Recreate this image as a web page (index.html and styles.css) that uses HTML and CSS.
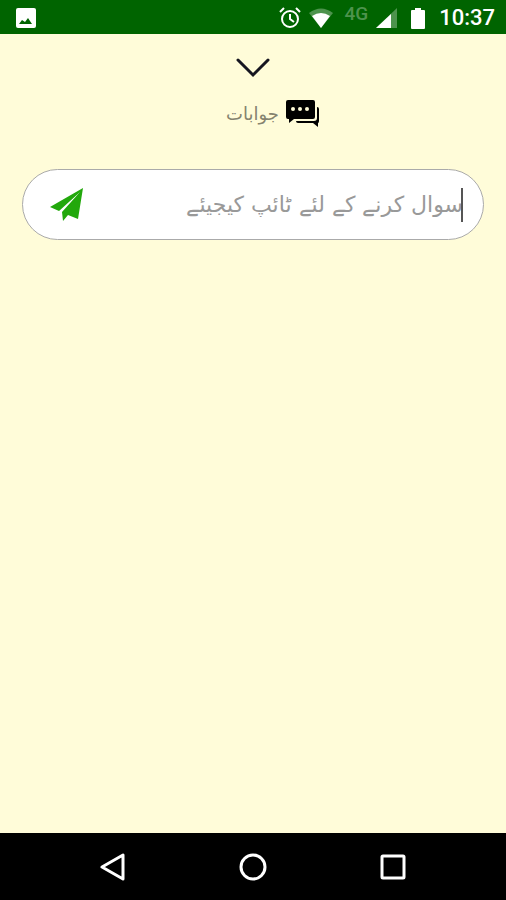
FILE: index.html
```html
<!DOCTYPE html>
<html lang="ur">
  <head>
    <meta charset="UTF-8" />
    <meta name="viewport" content="width=device-width, initial-scale=1.0" />
    <title>جوابات</title>
    <link rel="stylesheet" href="styles.css">
  </head>
  <body>
    <header class="status-bar">
      <svg class="icon-photo" width="20" height="20" viewBox="0 0 20 20">
        <rect width="20" height="20" rx="2" fill="#fff" />
        <path d="M3 16l3-4 3 2 3-4 4 6z" fill="#006400" />
      </svg>
      <div class="status-icons">
        <svg width="22" height="22" viewBox="0 0 22 22" fill="none" stroke="#fff" stroke-width="2">
          <circle cx="11" cy="12" r="8" />
          <path d="M11 7v5l4 3M1 5l4-4M21 5l-4-4" />
        </svg>
        <svg class="icon-wifi" width="24" height="20" viewBox="0 0 24 20">
          <path d="M0 5Q12-4 24 5L12 20z" fill="#4d934d" />
          <path d="M3 8Q12 2 21 8L12 20z" fill="#fff" />
        </svg>
        <span class="network">4G</span>
        <svg class="icon-signal" width="21" height="20" viewBox="0 0 21 20">
          <path d="M21 0v20H0z" fill="#4d934d" />
          <path d="M15 6v14H0z" fill="#fff" />
        </svg>
        <svg class="icon-battery" width="14" height="21" viewBox="0 0 14 21">
          <path d="M4 0h6v2h3q1 0 1 1v17q0 1-1 1H1q-1 0-1-1V3q0-1 1-1h3z" fill="#fff" />
        </svg>
        <span class="clock">10:37</span>
      </div>
    </header>

    <main class="content">
      <button class="collapse" type="button" aria-label="Close">
        <svg width="34" height="20" viewBox="0 0 34 20" fill="none" stroke="#161620" stroke-width="3" stroke-linecap="round">
          <path d="M2 2l15 15L32 2" />
        </svg>
      </button>

      <div class="answers" dir="rtl">
        <svg width="34" height="27" viewBox="0 0 34 27">
          <path d="M2 0h25q2 0 2 2v15q0 2-2 2H8l-5 4v-4H2q-2 0-2-2V2q0-2 2-2z" fill="#000" />
          <path d="M31 7q2 0 2 2v12q0 2-1 2v4l-5-4H12q-2 0-2-2h18q3 0 3-3z" fill="#000" />
          <circle cx="7" cy="9" r="2" fill="#fffcd9" />
          <circle cx="14" cy="9" r="2" fill="#fffcd9" />
          <circle cx="21" cy="9" r="2" fill="#fffcd9" />
        </svg>
        <span>جوابات</span>
      </div>

      <form class="question" dir="rtl">
        <input class="question-input" type="text" aria-label="سوال" placeholder="سوال کرنے کے لئے ٹائپ کیجیئے" />
        <span class="caret"></span>
        <button class="send" type="button" aria-label="Send">
          <svg width="34" height="34" viewBox="0 0 34 34" fill="#22a80c">
            <path d="M34 0L1 19l9 4L31 4 13 24l1 9 5-6 10 4z" />
          </svg>
        </button>
      </form>
    </main>

    <nav class="nav-bar">
      <button type="button" aria-label="Back">
        <svg width="28" height="28" viewBox="0 0 28 28"><path d="M24 2v24L3 14z" /></svg>
      </button>
      <button type="button" aria-label="Home">
        <svg width="28" height="28" viewBox="0 0 28 28"><circle cx="14" cy="14" r="12" /></svg>
      </button>
      <button type="button" aria-label="Recent">
        <svg width="28" height="28" viewBox="0 0 28 28"><rect x="3" y="3" width="22" height="22" rx="1" /></svg>
      </button>
    </nav>
  </body>
</html>
```
FILE: styles.css
```css
* {
  box-sizing: border-box;
}

body {
  display: flex;
  flex-direction: column;
  min-height: 100vh;
  margin: 0;
  background-color: #fffcd9;
  font-family: "DejaVu Sans", sans-serif;
}

svg {
  display: block;
}

button {
  padding: 0;
  border: none;
  background: none;
  cursor: pointer;
}

.status-bar {
  display: flex;
  justify-content: space-between;
  align-items: center;
  height: 34px;
  padding: 2px 11px 0 16px;
  background-color: #006400;
  color: white;
  font-family: Roboto, sans-serif;
}

.status-icons {
  display: flex;
  align-items: center;
  gap: 8px;
}

.network {
  margin: 0 0 8px 3px;
  color: #4d934d;
  font-size: 19px;
  font-weight: 500;
  line-height: 20px;
}

.icon-battery {
  margin: 0 6px;
}

.clock {
  font-size: 22px;
  font-weight: 500;
  line-height: 32px;
}

.content {
  display: flex;
  flex: 1;
  flex-direction: column;
  align-items: center;
  padding: 24px 22px;
}

.answers {
  display: flex;
  align-items: center;
  gap: 7px;
  height: 28px;
  margin: 21px 0 42px 40px;
  color: #85836f;
  font-size: 18px;
}

.question {
  display: flex;
  position: relative;
  align-items: center;
  width: 100%;
  height: 71px;
  padding: 0 20px 0 26px;
  border: 1px solid #aaa;
  border-radius: 36px;
  background-color: white;
}

.question-input {
  flex: 1;
  min-width: 0;
  height: 48px;
  padding: 0;
  border: none;
  outline: none;
  background: none;
  color: #444;
  font-family: inherit;
  font-size: 22px;
}

.question-input::placeholder {
  color: #999;
  opacity: 1;
}

.caret {
  position: absolute;
  top: 18px;
  right: 20px;
  width: 2px;
  height: 34px;
  background-color: #555;
}

.nav-bar {
  display: flex;
  justify-content: center;
  align-items: center;
  gap: 92px;
  height: 67px;
  background-color: black;
}

.nav-bar button {
  width: 48px;
  height: 48px;
}

.nav-bar svg {
  margin: 0 auto;
  fill: none;
  stroke: white;
  stroke-width: 3;
  stroke-linejoin: round;
}
```
